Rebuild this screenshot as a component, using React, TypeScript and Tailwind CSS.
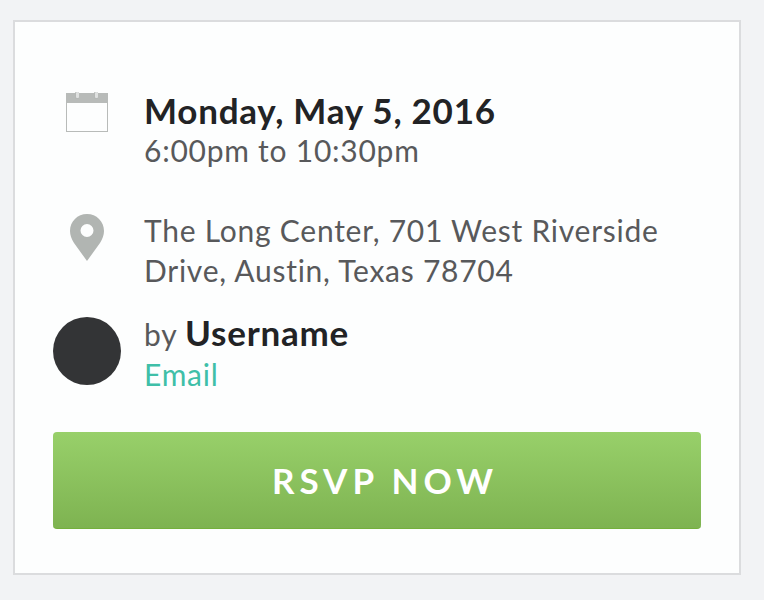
function CalendarIcon() {
  return (
    <svg className="block h-10 w-[42px]" viewBox="0 0 42 40" aria-hidden="true">
      <rect x="0" y="1" width="42" height="39" fill="#b8bbb9" />
      <rect x="1" y="11" width="40" height="28" fill="#fdfefe" />
      <rect x="9" y="0" width="4" height="7" rx="1" fill="#b5b8b6" />
      <rect x="28" y="0" width="4" height="7" rx="1" fill="#b5b8b6" />
      <rect x="10" y="0" width="3" height="6" rx="1" fill="#dfe1e0" />
      <rect x="29" y="0" width="3" height="6" rx="1" fill="#dfe1e0" />
    </svg>
  );
}

function PinIcon() {
  return (
    <svg className="block h-[47px] w-[34px]" viewBox="0 0 34 47" aria-hidden="true">
      <path
        fillRule="evenodd"
        fill="#b1b5b2"
        d="M17 0C7.500 0 0 7.500 0 17C0 21 1.500 25 4 29L17 47L30 29C32.500 25 34 21 34 17C34 7.500 26.500 0 17 0ZM17 10A6.500 6.500 0 1 1 17 23A6.500 6.500 0 1 1 17 10Z"
      />
    </svg>
  );
}

export default function App() {
  return (
    <main className="min-h-screen bg-[#f2f3f5] pt-5 pr-[23px] pb-6 pl-[13px] font-['Lato',sans-serif] text-[30px] leading-10 tracking-wide text-[#58595b]">
      <article className="border-2 border-[#dbdcde] bg-[#fdfefe] px-[38px] pt-[68px] pb-11">
        <div className="flex gap-[23px]">
          <div className="flex w-[68px] shrink-0 justify-center pt-[2px]">
            <CalendarIcon />
          </div>
          <div className="min-w-0 flex-1">
            <h1 className="text-[35px] font-bold leading-10 text-[#222325]">Monday, May 5, 2016</h1>
            <p>6:00pm to 10:30pm</p>
          </div>
        </div>

        <div className="mt-10 flex gap-[23px]">
          <div className="flex w-[68px] shrink-0 justify-center pt-1">
            <PinIcon />
          </div>
          <address className="min-w-0 flex-1 not-italic">
            The Long Center, 701 West Riverside Drive, Austin, Texas 78704
          </address>
        </div>

        <div className="mt-[22px] flex items-start gap-[23px]">
          <div className="mt-[5px] size-[68px] shrink-0 rounded-full bg-[#333436]" />
          <div className="min-w-0 flex-1">
            <p>
              by <strong className="text-[35px] font-bold text-[#222325]">Username</strong>
            </p>
            <a href="#email" className="block w-fit text-[#3fbfa8]">
              Email
            </a>
          </div>
        </div>

        <button
          type="button"
          className="mt-[38px] block h-[97px] w-full rounded border-b border-[#74b03c] bg-linear-to-b from-[#98d06a] to-[#7eb351] pl-4 text-[35px] font-bold tracking-[5px] text-white"
        >
          RSVP NOW
        </button>
      </article>
    </main>
  );
}
